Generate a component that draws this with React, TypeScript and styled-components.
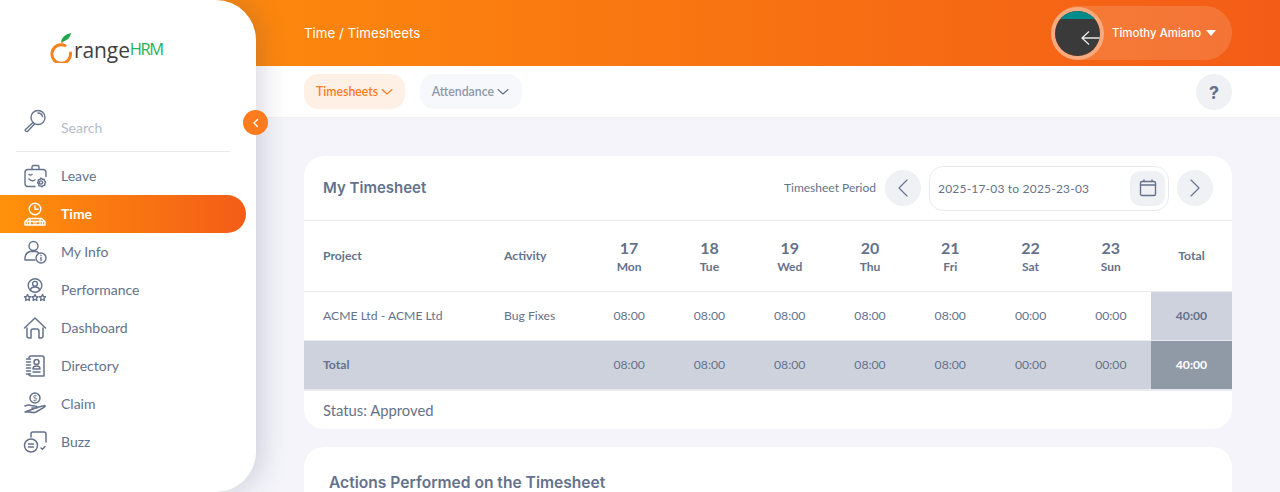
import React from "react";
import styled, { createGlobalStyle } from "styled-components";

const FONT = `Lato, "Noto Sans", sans-serif`;
const GRADIENT = "linear-gradient(90deg, #ff920b 0%, #f35c17 100%)";

const Global = createGlobalStyle`
  html, body { margin: 0; padding: 0; height: 100%; overflow: hidden; background: #f4f4fa; }
  #root { height: 492px; }
  * { box-sizing: border-box; }
  body { font-family: ${FONT}; color: #64728c; }
`;

const Page = styled.div`display: flex; width: 1280px; height: 492px; overflow: hidden; position: relative;`;

const Sidebar = styled.aside`
  position: relative; z-index: 5; flex: 0 0 256px; width: 256px; margin-right: -256px; height: 492px;
  background: #fff; border-radius: 0 40px 40px 0; box-shadow: 4px 0 28px rgba(60, 60, 100, 0.22);
  display: flex; flex-direction: column;
`;
const LogoArea = styled.div`height: 104px; padding: 33px 0 0 49px; display: flex; align-items: flex-start;`;
const LogoRow = styled.div`display: flex; align-items: flex-end; height: 30px;`;
const LogoRange = styled.span`font-family: "Open Sans", sans-serif; font-weight: 400; font-size: 21px; line-height: 24px; color: #3f3f3f; margin-left: -1px; letter-spacing: -.1px; margin-bottom: 1px;`;
const LogoHrm = styled.span`font-family: "Open Sans", sans-serif; font-size: 16.500px; line-height: 20px; color: #22b45b; letter-spacing: -1.5px; margin-bottom: 4px; margin-left: 0;`;
const SearchRow = styled.div`height: 48px; margin: 0 26px 0 16px; padding: 5px 0 0 7px; display: flex; align-items: flex-start; gap: 14px; border-bottom: 1px solid #e8eaef;`;
const SearchText = styled.span`font-size: 14px; color: #b4bccb; margin-top: 11px; line-height: 16px;`;
const Menu = styled.nav`display: flex; flex-direction: column; margin-top: 5px;`;
const MenuItem = styled.div<{ $active?: boolean }>`
  height: 38px; width: 246px; padding-left: 23px; display: flex; align-items: center; gap: 14px;
  font-size: 14px; font-weight: ${(p) => (p.$active ? 700 : 400)};
  color: ${(p) => (p.$active ? "#fff" : "#64728c")};
  background: ${(p) => (p.$active ? GRADIENT : "transparent")};
  border-radius: 0 19px 19px 0;
`;
const MenuLabel = styled.span`margin-bottom: 2px;`;
const Collapse = styled.div`
  position: absolute; left: 243px; top: 110px; width: 25px; height: 25px; border-radius: 50%;
  background: #ff7b1d; display: flex; align-items: center; justify-content: center; z-index: 6;
`;

const Main = styled.main`flex: 0 0 1280px; width: 1280px; display: flex; flex-direction: column; height: 492px;`;
const TopBar = styled.header`
  height: 66px; flex: none; background: ${GRADIENT}; padding: 0 48px 0 304px;
  display: flex; align-items: center; justify-content: space-between;
`;
const Crumb = styled.div`font-family: Inter, sans-serif; color: #fff; font-size: 13.3px; font-weight: 400;`;
const UserPill = styled.div`
  height: 54px; width: 181px; border-radius: 27px; background: rgba(255, 255, 255, 0.14);
  display: flex; align-items: center; gap: 8px; position: relative;
`;
const Avatar = styled.div`
  width: 53px; height: 53px; border-radius: 50%; border: 4px solid rgba(255, 255, 255, 0.36); flex: none;
  overflow: hidden; background-clip: padding-box;
`;
const UserName = styled.span`font-family: Inter, sans-serif; font-size: 11.45px; color: #fff; font-weight: 500;`;
const Caret = styled.span`display: inline-block; width: 0; height: 0; margin-left: 5px; border-left: 5px solid transparent; border-right: 5px solid transparent; border-top: 6px solid #fff; vertical-align: 1px;`;

const SubNav = styled.div`
  height: 52px; flex: none; background: #fff; padding: 8px 48px 0 304px; display: flex; gap: 15px; align-items: flex-start;
  border-bottom: 1px solid #f0f0f5;
`;
const Tab = styled.div<{ $active?: boolean }>`
  height: 35px; padding: 0 ${(p) => (p.$active ? 11.5 : 12.5)}px 0 12px; border-radius: 14px; display: flex; align-items: center; gap: 3px;
  font-size: 12.3px; font-weight: 600;
  background: ${(p) => (p.$active ? "#fff0e6" : "#f7f8fb")};
  color: ${(p) => (p.$active ? "#ff7b1d" : "#8f96a8")};
`;
const Help = styled.div`
  margin-left: auto; width: 36px; height: 36px; border-radius: 50%; background: #f0f1f5;
  display: flex; align-items: center; justify-content: center; font-family: Inter, sans-serif;
  font-weight: 700; font-size: 18px; color: #64728c;
`;

const Content = styled.div`flex: 1; padding: 38px 48px 0 304px; display: flex; flex-direction: column; gap: 18px; overflow: hidden;`;
const Card = styled.section`background: #fff; border-radius: 20px; flex: none; overflow: hidden;`;
const CardHead = styled.div`height: 65px; padding: 0 19px; display: flex; align-items: center; border-bottom: 1px solid #e8eaef;`;
const Title = styled.h2`margin: 0 auto 2px 0; font-family: Inter, sans-serif; font-size: 15px; font-weight: 600; color: #64728c;`;
const PeriodLabel = styled.span`font-size: 12px; margin-right: 9px; color: #64728c; margin-bottom: 1px;`;
const RoundBtn = styled.div`
  width: 36px; height: 36px; border-radius: 50%; background: #f0f1f5; display: flex; align-items: center; justify-content: center; flex: none;
`;
const DateField = styled.div`
  width: 240px; height: 45px; margin: 0 8px; border: 1px solid #e8eaef; border-radius: 14px;
  display: flex; align-items: center; justify-content: space-between; padding: 0 3px 0 8px; font-size: 12px; color: #64728c; letter-spacing: .2px;
`;
const CalBtn = styled.div`width: 35px; height: 35px; border-radius: 10px; background: #f0f1f5; display: flex; align-items: center; justify-content: center;`;

const Row = styled.div<{ $h: number; $total?: boolean }>`
  display: grid; grid-template-columns: 181px 104px repeat(7, 80.29px) 1fr; height: ${(p) => p.$h}px;
  align-items: stretch; background: ${(p) => (p.$total ? "#ced2dc" : "#fff")};
  border-bottom: ${(p) => (p.$total ? 2 : 1)}px solid #e8eaef;
`;
const Cell = styled.div<{ $left?: boolean; $bold?: boolean; $bg?: string; $fg?: string }>`
  display: flex; flex-direction: column; align-items: ${(p) => (p.$left ? "flex-start" : "center")}; justify-content: center;
  padding-left: ${(p) => (p.$left ? 19 : 0)}px; padding-bottom: 2px; font-size: 12.2px;
  font-weight: ${(p) => (p.$bold ? 700 : 400)}; background: ${(p) => p.$bg ?? "transparent"}; color: ${(p) => p.$fg ?? "#64728c"};
`;
const DayStack = styled.div`margin-top: 4px; display: flex; flex-direction: column; align-items: center;`;
const DayNum = styled.div`font-size: 16px; font-weight: 700; line-height: 20px;`;
const DayName = styled.div`font-size: 12px; font-weight: 700; line-height: 18px;`;
const Status = styled.div`height: 38px; padding: 11px 19px 0; font-size: 14.800px; line-height: 17px; color: #64728c;`;
const SecondHead = styled.div`padding: 26px 25px; font-family: Inter, sans-serif; font-size: 15.600px; font-weight: 600; color: #64728c; line-height: 20px;`;

const Ic = ({ children, w = 24, h = 24, color = "#64728c", sw = 1.4 }: { children: React.ReactNode; w?: number; h?: number; color?: string; sw?: number }) => (
  <svg width={w} height={h} viewBox={`0 0 ${w} ${h}`} fill="none" stroke={color} strokeWidth={sw} strokeLinecap="round" strokeLinejoin="round" style={{ flex: "none" }}>{children}</svg>
);

const days: [string, string][] = [["17","Mon"],["18","Tue"],["19","Wed"],["20","Thu"],["21","Fri"],["22","Sat"],["23","Sun"]];
const hours = ["08:00","08:00","08:00","08:00","08:00","00:00","00:00"];

const icons: Record<string, (c: string) => React.ReactNode> = {
  Leave: () => <Ic><path d="M9 5.500V3q0-1.500 1.500-1.500h4q1.500 0 1.500 1.500v2.500"/><path d="M7 5.500h13q3 0 3 3v4M12 22.500H5q-3 0-3-3v-11q0-3 3-3h3"/><path d="M6 10.500q1.500 1.200 3 0M6 15q3 3 6 1"/><circle cx="18" cy="18.500" r="1.600"/><path d="M18 14l1.300 1.200 1.800-.1.300 1.700 1.300 1.300-1 1.500.1 1.700-1.700.3-1 1.200-1.500-.9-1.700-.2-.2-1.700-1.200-1.200.9-1.500-.1-1.700 1.700-.2z"/></Ic>,
  Time: (c) => <Ic color={c}><circle cx="12" cy="7" r="5.800"/><path d="M12 3.700V7.200h3.200"/><path d="M2 23v-3.500l3.500-3h13l3.500 3V23zM2 19.500h20M7 16.500V23M11 19.500v1M11 22v1M13 19.500v1M13 22v1M17 16.500V23M4.500 19.500V23M19.500 19.500V23"/></Ic>,
  "My Info": () => <Ic><circle cx="10.500" cy="6" r="4.500"/><path d="M2 20q-.5-7 5-8.500h6q1.500.3 2.500 1.500M2 20h10"/><circle cx="18" cy="18" r="5"/><path d="M18 17.500v3M18 15.300v.2"/></Ic>,
  Performance: () => <Ic><circle cx="12" cy="7.500" r="6.800"/><circle cx="12" cy="5.800" r="2.400"/><path d="M7.500 12.500q0-3.500 4.500-3.500t4.500 3.500"/><path d="M4.500 16.500l1 2 2 .3-1.500 1.500.4 2.200-1.900-1-1.900 1 .4-2.200L1.500 18.800l2-.3zM12 16.500l1 2 2 .3-1.500 1.500.4 2.200-1.900-1-1.900 1 .4-2.200-1.500-1.500 2-.3zM19.500 16.500l1 2 2 .3-1.500 1.500.4 2.200-1.900-1-1.900 1 .4-2.200-1.500-1.500 2-.3z"/></Ic>,
  Dashboard: () => <Ic sw={1.500}><path d="M1.500 12L12 2l10.500 10"/><path d="M4 12v8q0 2 2 2h2v-7q0-2 2-2h4q2 0 2 2v7h2q2 0 2-2v-8"/></Ic>,
  Directory: () => <Ic sw={1.500}><path d="M6 4q0-2 2-2h11q2 0 2 2v18H8q-2 0-2-2"/><path d="M3.500 5h4M3.500 8h4M3.500 11h4M3.500 14h4M3.500 17h4M3.500 20h4"/><circle cx="13.500" cy="8" r="2.500"/><path d="M10 15q0-3 3.500-3t3.500 3zM10 18h7"/></Ic>,
  Claim: () => <Ic sw={1.500}><circle cx="12" cy="6" r="5"/><text x="12" y="8.600" fontSize="7.500" textAnchor="middle" fill="#64728c" stroke="none">$</text><path d="M2 14q4-1.500 6-.5l4 .5q2 .2 2 2H9M14 15.500l8-2q.5 1-1 1.800L13 20q-3 1-6 0H2z"/></Ic>,
  Buzz: () => <Ic sw={1.500}><path d="M8 7V4q0-2 2-2h11q2 0 2 2v8"/><circle cx="8" cy="15.500" r="6.500"/><path d="M5.500 14h5M5.500 17h5"/><path d="M18 18l1.500 1.200L22 16.500"/></Ic>,
};

const menu = ["Leave", "Time", "My Info", "Performance", "Dashboard", "Directory", "Claim", "Buzz"];

export default function App() {
  return (
    <Page>
      <Global />
      <Sidebar>
        <LogoArea>
          <LogoRow>
            <svg width="26" height="30" viewBox="0 0 26 30" fill="none" style={{ flex: "none" }}>
              <path d="M16 12.500A9.300 9.300 0 1 0 21.500 20" stroke="#f58220" strokeWidth="3" strokeLinecap="round"/>
              <path d="M12.500 10q.5-1.500 2-1.500" stroke="#f58220" strokeWidth="1.300"/>
              <path d="M12 9q1-7 10-9-.5 7-10 9z" fill="#22a84f"/>
            </svg>
            <LogoRange>range</LogoRange>
            <LogoHrm>HRM</LogoHrm>
          </LogoRow>
        </LogoArea>
        <SearchRow>
          <Ic><circle cx="15" cy="8.500" r="7"/><path d="M15 4q3.500 0 4.500 3.500" /><path d="M10 13.500L2 21q1 2 2.500 1.500L11.500 15"/></Ic>
          <SearchText>Search</SearchText>
        </SearchRow>
        <Menu>
          {menu.map((m) => (
            <MenuItem key={m} $active={m === "Time"}>
              {icons[m](m === "Time" ? "#fff" : "#64728c")}
              <MenuLabel>{m}</MenuLabel>
            </MenuItem>
          ))}
        </Menu>
        <Collapse>
          <Ic w={10} h={12} color="#fff" sw={1.300}><path d="M6.500 2.500L3 6l3.500 3.500"/></Ic>
        </Collapse>
      </Sidebar>
      <Main>
        <TopBar>
          <Crumb>Time / Timesheets</Crumb>
          <UserPill>
            <Avatar>
              <svg width="45" height="45" viewBox="0 0 45 45" style={{ display: "block" }}>
                <rect width="45" height="45" fill="#3a3a3a"/>
                <rect width="45" height="8" fill="#008a8a"/>
                <path d="M45 27H27M34 20.500L27 27l7 6.500" fill="none" stroke="#e8e8e8" strokeWidth="1.300"/>
              </svg>
            </Avatar>
            <UserName>Timothy Amiano<Caret /></UserName>
          </UserPill>
        </TopBar>
        <SubNav>
          <Tab $active>Timesheets
            <Ic w={12} h={12} color="#ff7b1d" sw={1.100}><path d="M1 3.500L6 8l5-4.500"/></Ic>
          </Tab>
          <Tab>Attendance
            <Ic w={12} h={12} color="#64728c" sw={1.100}><path d="M1 3.500L6 8l5-4.500"/></Ic>
          </Tab>
          <Help>?</Help>
        </SubNav>
        <Content>
          <Card>
            <CardHead>
              <Title>My Timesheet</Title>
              <PeriodLabel>Timesheet Period</PeriodLabel>
              <RoundBtn><Ic w={14} h={22} sw={1.100}><path d="M11 3L3 11l8 8"/></Ic></RoundBtn>
              <DateField>
                2025-17-03 to 2025-23-03
                <CalBtn><Ic w={18} h={18} sw={1.400}><rect x="1.500" y="2.500" width="15" height="14" rx="1.500"/><path d="M1.500 6h15M5 1v1.500M13 1v1.500"/></Ic></CalBtn>
              </DateField>
              <RoundBtn><Ic w={14} h={22} sw={1.100}><path d="M3 3l8 8-8 8"/></Ic></RoundBtn>
            </CardHead>
            <Row $h={71}>
              <Cell $left $bold>Project</Cell>
              <Cell $left $bold>Activity</Cell>
              {days.map(([n, d]) => (
                <Cell key={d}><DayStack><DayNum>{n}</DayNum><DayName>{d}</DayName></DayStack></Cell>
              ))}
              <Cell $bold>Total</Cell>
            </Row>
            <Row $h={49}>
              <Cell $left>ACME Ltd - ACME Ltd</Cell>
              <Cell $left>Bug Fixes</Cell>
              {hours.map((h, i) => <Cell key={i}>{h}</Cell>)}
              <Cell $bold $bg="#ced2dc">40:00</Cell>
            </Row>
            <Row $h={50} $total>
              <Cell $left $bold>Total</Cell>
              <Cell />
              {hours.map((h, i) => <Cell key={i}>{h}</Cell>)}
              <Cell $bold $bg="#9099a6" $fg="#fff">40:00</Cell>
            </Row>
            <Status>Status: Approved</Status>
          </Card>
          <Card>
            <SecondHead>Actions Performed on the Timesheet</SecondHead>
          </Card>
        </Content>
      </Main>
    </Page>
  );
}
